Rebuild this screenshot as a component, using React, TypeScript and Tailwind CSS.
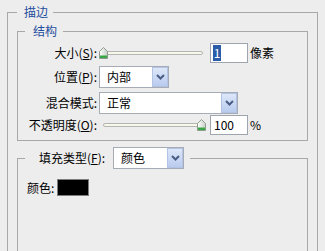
import React from 'react'

const blue = 'text-[#1f4e9e]'

function Thumb() {
  return (
    <svg width="9" height="12" viewBox="0 0 9 12">
      <defs>
        <linearGradient id="thumbFill" x1="0" y1="0" x2="1" y2="0">
          <stop offset="0" stopColor="#ffffff" />
          <stop offset="1" stopColor="#c9cfc9" />
        </linearGradient>
      </defs>
      <path d="M0.5 4.5 L4.5 0.5 L8.5 4.5 V11.5 H0.5 Z" fill="url(#thumbFill)" stroke="#8d9c8d" />
      <rect x="1" y="8.5" width="7" height="2.5" fill="#3aa544" />
    </svg>
  )
}

function Slider({ right }: { right?: boolean }) {
  return (
    <div className="relative w-[108px] h-[22px] flex items-center">
      <div className="mx-[4px] flex-1 h-[4px] rounded-full border border-[#b4b4b0] bg-[#f7f7ec]" />
      <div className={`absolute top-[5px] ${right ? 'right-[1px]' : 'left-0'}`}>
        <Thumb />
      </div>
    </div>
  )
}

function Select({ w, text }: { w: string; text: string }) {
  return (
    <div className={`${w} h-[22px] flex border border-[#a5acb5] bg-white`}>
      <span className="flex-1 pl-[7px] leading-[20px]">{text}</span>
      <div className="w-[16px] h-full flex items-center justify-center border border-[#b3c3e3] bg-gradient-to-b from-[#dde7f9] to-[#b9cbee]">
        <svg width="9" height="6" viewBox="0 0 9 6">
          <polyline points="1,1 4.5,4.5 8,1" fill="none" stroke="#4a5d85" strokeWidth="2" />
        </svg>
      </div>
    </div>
  )
}

function Label({ children }: { children: React.ReactNode }) {
  return <div className="w-[72px] text-right whitespace-nowrap mr-[2px]">{children}</div>
}

export default function App() {
  return (
    <div className="w-[325px] h-[251px] overflow-hidden bg-[#ededed] text-[12px] leading-[16px] text-black font-['Noto_Sans_CJK_SC','Noto_Sans',sans-serif] pl-[7px] pt-[4px]">
      <fieldset className="w-[311px] h-[260px] border border-[#a8a8a8] px-[9px] pt-[3px]">
        <legend className={`pl-[7px] pr-[5px] ${blue}`}>描边</legend>

        {/* 结构 */}
        <fieldset className="border border-[#a8a8a8] px-[7px] pt-[3px] pb-[4px]">
          <legend className={`pl-[8px] pr-[6px] ${blue}`}>结构</legend>

          <div className="flex items-center h-[22px]">
            <Label>
              大小(<span className="underline">S</span>):
            </Label>
            <Slider />
            <div className="ml-[3px] w-[38px] h-[20px] border border-[#9ea5ae] bg-white flex items-center pl-[2px]">
              <span className="inline-block w-[8px] h-[16px] bg-[#2b5ca8] text-white text-center leading-[16px]">1</span>
            </div>
            <span className="ml-[2px]">像素</span>
          </div>

          <div className="flex items-center h-[22px] mt-[2px]">
            <Label>
              位置(<span className="underline">P</span>):
            </Label>
            <Select w="w-[70px]" text="内部" />
          </div>

          <div className="flex items-center h-[22px] mt-[4px]">
            <Label>混合模式:</Label>
            <Select w="w-[139px]" text="正常" />
          </div>

          <div className="flex items-center h-[22px]">
            <Label>
              不透明度(<span className="underline">O</span>):
            </Label>
            <Slider right />
            <div className="ml-[3px] w-[38px] h-[20px] border border-[#9ea5ae] bg-white flex items-center pl-[3px]">
              100
            </div>
            <span className="ml-[2px]">%</span>
          </div>
        </fieldset>

        {/* 填充 */}
        <fieldset className="mt-[6px] h-[120px] border border-[#a8a8a8] px-[7px]">
          <legend className="pl-[14px] pr-[6px] flex items-center">
            <span>
              填充类型(<span className="underline">F</span>):
            </span>
            <div className="ml-[8px]">
              <Select w="w-[71px]" text="颜色" />
            </div>
          </legend>

          <div className="flex items-center h-[17px] mt-[10px] ml-[2px]">
            <span>颜色:</span>
            <div className="ml-[3px] w-[32px] h-[17px] border border-[#7c7c7c] bg-black" />
          </div>
        </fieldset>
      </fieldset>
    </div>
  )
}
